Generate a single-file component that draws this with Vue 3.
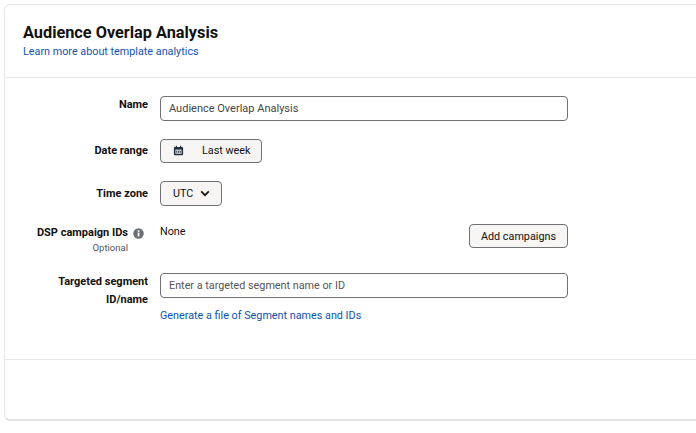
<template>
  <div class="page">
    <section class="card">
      <header class="card-header">
        <h1>Audience Overlap Analysis</h1>
        <a class="link learn-link" href="#">Learn more about template analytics</a>
      </header>

      <form class="form" @submit.prevent>
        <div class="row">
          <label class="label top">Name</label>
          <div class="control">
            <input v-model="name" class="text-input" type="text">
          </div>
        </div>

        <div class="row centered">
          <label class="label">Date range</label>
          <div class="control">
            <button type="button" class="btn date-btn">
              <svg class="cal" width="11" height="11" viewBox="0 0 12 12">
                <path d="M3 .8h1.3v1.4h3.4V.8H9v1.4h1c.6 0 1 .4 1 1v7c0 .6-.4 1-1 1H2c-.6 0-1-.4-1-1v-7c0-.6.4-1 1-1h1z" fill="#232f3e"/>
                <path d="M2.6 5h6.8v4.6H2.6z" fill="#dcdcdc"/>
                <path d="M3.6 6.4h1v2h-1zM5.5 6.4h1v2h-1zM7.4 6.4h1v2h-1z" fill="#232f3e"/>
              </svg>
              <span>Last week</span>
            </button>
          </div>
        </div>

        <div class="row centered">
          <label class="label">Time zone</label>
          <div class="control">
            <button type="button" class="btn tz-btn">
              <span>UTC</span>
              <svg width="10" height="7" viewBox="0 0 10 7">
                <path d="M1.2 1.4 5 5.2l3.8-3.8" fill="none" stroke="#111" stroke-width="1.7"/>
              </svg>
            </button>
          </div>
        </div>

        <div class="row campaigns-row">
          <div class="label top">
            <div class="label-line">
              DSP campaign IDs
              <svg class="info" width="11" height="11" viewBox="0 0 11 11">
                <circle cx="5.5" cy="5.5" r="5.2" fill="#6b6f73"/>
                <rect x="4.7" y="4.6" width="1.7" height="3.8" fill="#fff"/>
                <rect x="4.7" y="2.2" width="1.7" height="1.6" fill="#fff"/>
              </svg>
            </div>
            <div class="optional">Optional</div>
          </div>
          <div class="control campaigns">
            <span class="none">None</span>
            <button type="button" class="btn add-btn">Add campaigns</button>
          </div>
        </div>

        <div class="row segment-row">
          <label class="label segment-label">Targeted segment ID/name</label>
          <div class="control">
            <input v-model="segment" class="text-input" type="text" placeholder="Enter a targeted segment name or ID">
            <a class="link gen-link" href="#">Generate a file of Segment names and IDs</a>
          </div>
        </div>
      </form>

      <footer class="card-footer"></footer>
    </section>
  </div>
</template>

<script setup>
import { ref } from 'vue'

const name = ref('Audience Overlap Analysis')
const segment = ref('')
</script>

<style>
html, body { margin: 0; background: #fff; overflow: hidden; }
</style>

<style scoped>
.page { width: 696px; height: 433px; padding: 4px 0 0 4px; box-sizing: border-box; overflow: hidden; font-family: Roboto, "Noto Sans", sans-serif; color: #111; }
.card { width: 720px; height: 417px; box-sizing: border-box; display: flex; flex-direction: column; background: #fff; border: 1px solid #e8e8e8; border-bottom: 2px solid #e2e2e2; border-radius: 6px; }
.card-header { height: 73px; box-sizing: border-box; padding: 17px 18px 0; border-bottom: 1px solid #e7e7e7; }
h1 { margin: 0; font-size: 16.3px; line-height: 22px; font-weight: 700; }
.link { color: #0f54b0; font-size: 10.8px; line-height: 14px; text-decoration: none; display: block; }
.learn-link { margin-top: 1px; }
.form { flex: 1; padding-top: 18px; box-sizing: border-box; border-bottom: 1px solid #e7e7e7; }
.row { display: flex; gap: 12px; margin-bottom: 18px; }
.centered { align-items: center; }
.label { width: 143px; flex: none; text-align: right; font-size: 11px; font-weight: 700; line-height: 16px; box-sizing: border-box; }
.top { padding-top: 1px; }
.control { width: 408px; }
.text-input { display: block; width: 100%; height: 25px; box-sizing: border-box; padding: 0 8px 1px; border: 1px solid #6f7174; border-radius: 4px; font: inherit; font-size: 11px; color: #444; outline: none; }
.text-input::placeholder { color: #555; opacity: 1; font-size: 10.8px; }
.btn { height: 24px; box-sizing: border-box; border: 1px solid #6f7174; border-radius: 4px; background: #f6f5f3; font: inherit; font-size: 10.8px; color: #111; padding: 0 0 1px; display: inline-flex; align-items: center; vertical-align: top; }
.date-btn { width: 102px; padding-left: 12px; gap: 18px; }
.tz-btn { width: 62px; height: 25px; padding-left: 12px; gap: 7px; }
.campaigns { display: flex; justify-content: space-between; align-items: flex-start; }
.none { font-size: 10.8px; line-height: 14px; padding-top: 1px; }
.add-btn { width: 99px; justify-content: center; padding: 0; }
.label-line { display: flex; justify-content: flex-end; align-items: center; gap: 5px; padding-right: 4px; }
.optional { font-size: 9.5px; font-weight: 400; color: #555; line-height: 12px; padding-right: 20px; margin-top: 1px; }
.campaigns-row { margin-bottom: 19px; }
.segment-label { padding-left: 40px; line-height: 18px; }
.gen-link { margin-top: 11px; }
.card-footer { height: 59px; }
</style>
